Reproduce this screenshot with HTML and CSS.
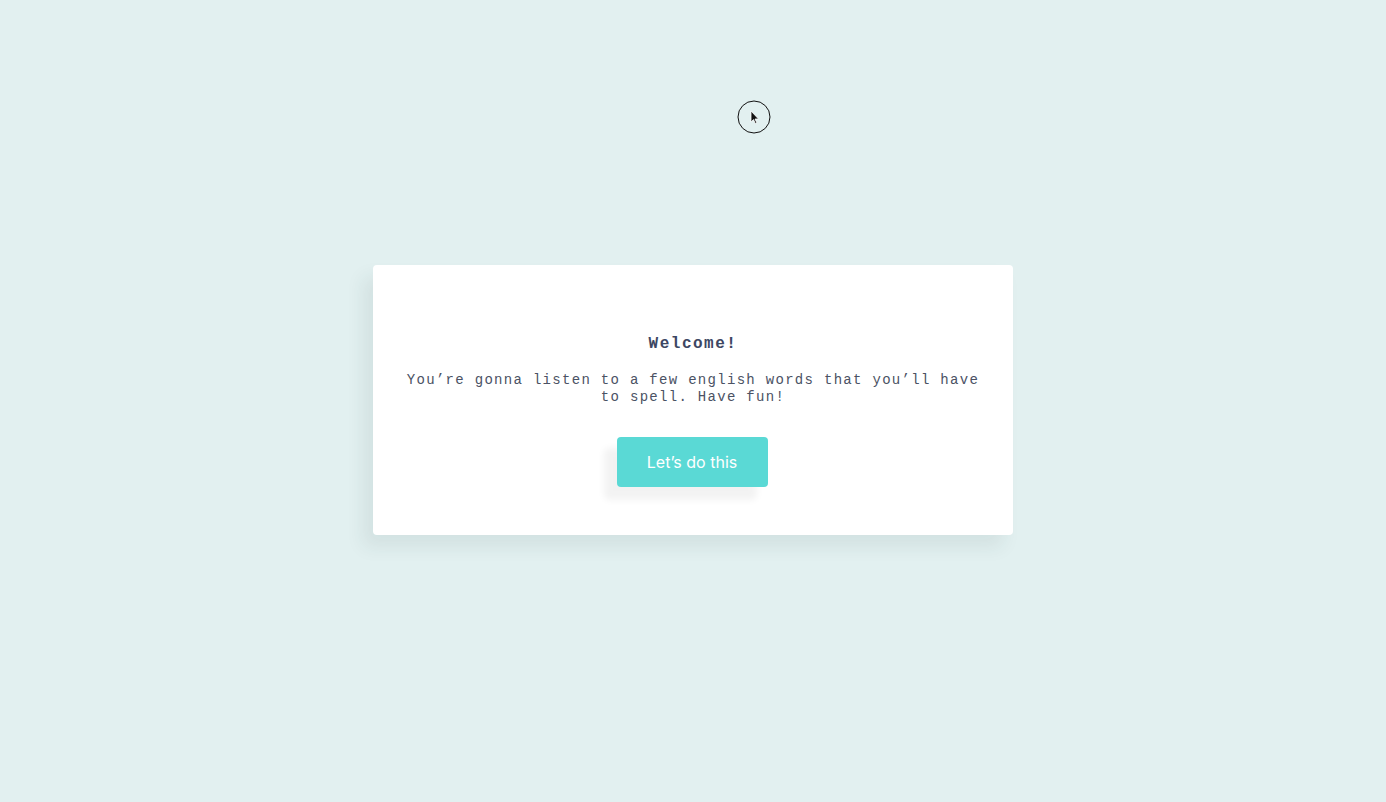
FILE: index.html
```html
<!DOCTYPE html>
<html lang="en">
<head>
<meta charset="utf-8">
<title>Welcome</title>
<link rel="stylesheet" href="styles.css">
</head>
<body>
<div class="cursor">
  <svg width="34" height="34" viewBox="0 0 34 34">
    <circle cx="17" cy="17" r="16" fill="none" stroke="#111" stroke-width="1"/>
    <path d="M14 11 L14 22 L16.5 19.6 L18.3 23.5 L19.8 22.8 L18 19 L21.5 19 Z" fill="#111" stroke="#fff" stroke-width="0.8"/>
  </svg>
</div>
<main class="stage">
  <section class="card">
    <h1 class="title">Welcome!</h1>
    <p class="intro">You’re gonna listen to a few english words that you’ll have to spell. Have fun!</p>
    <button class="cta">Let’s do this</button>
  </section>
</main>
</body>
</html>
```
FILE: styles.css
```css
html, body {
  margin: 0;
  padding: 0;
  height: 100%;
}
body {
  background: #e2f0f0;
  font-family: "Liberation Mono", monospace;
}
.stage {
  height: 100%;
  display: flex;
  align-items: center;
  justify-content: center;
}
.card {
  width: 640px;
  height: 270px;
  box-sizing: border-box;
  background: #fff;
  border-radius: 4px;
  box-shadow: -10px 12px 18px rgba(40, 70, 70, 0.08);
  padding: 69px 32px 48px;
  display: flex;
  flex-direction: column;
  align-items: center;
  text-align: center;
  margin-bottom: 2px;
}
.title {
  margin: 0;
  font-size: 16px;
  line-height: 20px;
  font-weight: bold;
  letter-spacing: 1.5px;
  color: #3d4763;
}
.intro {
  margin: 18px 0 0;
  font-size: 14px;
  line-height: 17px;
  letter-spacing: 1.3px;
  color: #4b5264;
}
.cta {
  margin: 31px 2px 0 0;
  width: 151px;
  height: 50px;
  border: none;
  border-radius: 4px;
  background: #5ad9d5;
  color: #fff;
  font-family: Inter, "Noto Sans", sans-serif;
  font-size: 16px;
  box-shadow: -12px 12px 7px 1px rgba(0, 0, 0, 0.05);
  cursor: pointer;
}
.cursor {
  position: absolute;
  left: 737px;
  top: 100px;
  width: 34px;
  height: 34px;
}
```
